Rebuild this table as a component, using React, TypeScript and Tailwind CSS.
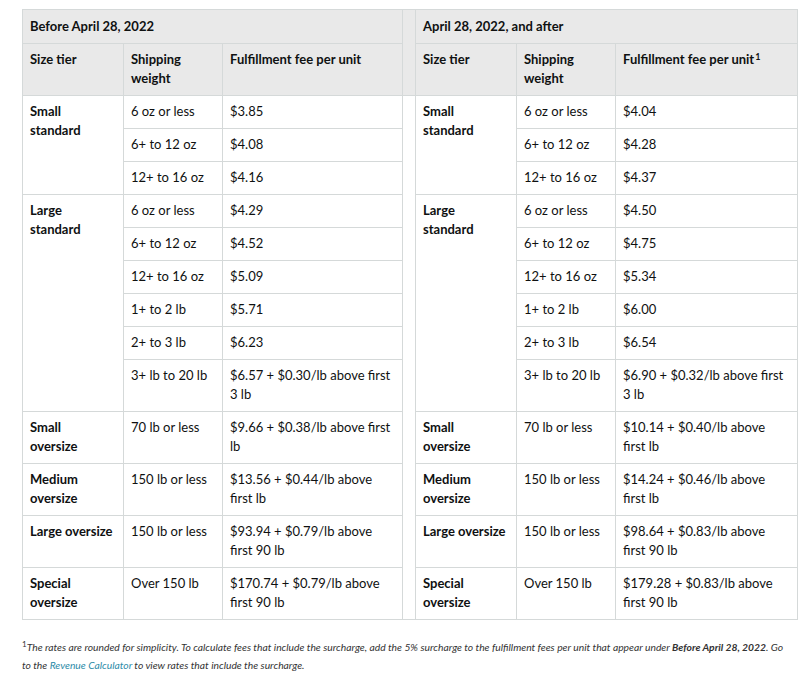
const before = [
  { tier: ["Small", "standard"], rows: [["6 oz or less", "$3.85"], ["6+ to 12 oz", "$4.08"], ["12+ to 16 oz", "$4.16"]] },
  {
    tier: ["Large", "standard"],
    rows: [
      ["6 oz or less", "$4.29"],
      ["6+ to 12 oz", "$4.52"],
      ["12+ to 16 oz", "$5.09"],
      ["1+ to 2 lb", "$5.71"],
      ["2+ to 3 lb", "$6.23"],
      ["3+ lb to 20 lb", "$6.57 + $0.30/lb above first 3 lb"],
    ],
  },
  { tier: ["Small", "oversize"], rows: [["70 lb or less", "$9.66 + $0.38/lb above first lb"]] },
  { tier: ["Medium", "oversize"], rows: [["150 lb or less", "$13.56 + $0.44/lb above first lb"]] },
  { tier: ["Large oversize"], rows: [["150 lb or less", "$93.94 + $0.79/lb above first 90 lb"]] },
  { tier: ["Special", "oversize"], rows: [["Over 150 lb", "$170.74 + $0.79/lb above first 90 lb"]] },
];

const after = [
  ["$4.04", "$4.28", "$4.37"],
  ["$4.50", "$4.75", "$5.34", "$6.00", "$6.54", "$6.90 + $0.32/lb above first 3 lb"],
  ["$10.14 + $0.40/lb above first lb"],
  ["$14.24 + $0.46/lb above first lb"],
  ["$98.64 + $0.83/lb above first 90 lb"],
  ["$179.28 + $0.83/lb above first 90 lb"],
];

const cell = "border border-[#d5d9d9] px-[7px] pt-[6px] pb-[7px] align-top";
const head = "border border-[#d5d9d9] bg-[#e9e9e9] px-[7px] pt-[6px] pb-[7px] align-top text-left font-bold";

// flatten into 13 body rows, tier cell goes on first row of each group
const bodyRows = before.flatMap((group, gi) =>
  group.rows.map((r, ri) => ({
    tier: ri === 0 ? group.tier : null,
    span: group.rows.length,
    weight: r[0],
    feeBefore: r[1],
    feeAfter: after[gi][ri],
  }))
);

const Tier = ({ lines }: { lines: string[] }) => (
  <>
    {lines.map((l, i) => (
      <div key={i} className="whitespace-nowrap">
        {l}
      </div>
    ))}
  </>
);

export default function App() {
  return (
    <div
      className="bg-white min-h-[676px] pt-[9px] pl-[22px] pr-[1px] text-[13px] leading-[19px] text-[#0f1111]"
      style={{ fontFamily: "Lato, 'Liberation Sans', sans-serif" }}
    >
      <table className="border-collapse table-fixed w-[775px]">
        <colgroup>
          <col className="w-[101px]" />
          <col className="w-[99px]" />
          <col className="w-[180px]" />
          <col className="w-[13px]" />
          <col className="w-[101px]" />
          <col className="w-[99px]" />
          <col className="w-[182px]" />
        </colgroup>
        <thead>
          <tr>
            <th colSpan={3} className={`${head} pt-[7px]`}>
              Before April 28, 2022
            </th>
            <th rowSpan={2} className="border border-[#d5d9d9] bg-[#e9e9e9]" />
            <th colSpan={3} className={`${head} pt-[7px]`}>
              April 28, 2022, and after
            </th>
          </tr>
          <tr>
            <th className={head}>Size tier</th>
            <th className={head}>Shipping weight</th>
            <th className={head}>Fulfillment fee per unit</th>
            <th className={head}>Size tier</th>
            <th className={head}>Shipping weight</th>
            <th className={head}>
              Fulfillment fee per unit<sup className="text-[9px] ml-[1px]">1</sup>
            </th>
          </tr>
        </thead>
        <tbody>
          {bodyRows.map((row, i) => (
            <tr key={i}>
              {row.tier && (
                <td rowSpan={row.span} className={`${cell} font-bold`}>
                  <Tier lines={row.tier} />
                </td>
              )}
              <td className={cell}>{row.weight}</td>
              <td className={cell}>{row.feeBefore}</td>
              {i === 0 && <td rowSpan={13} className="border border-[#d5d9d9]" />}
              {row.tier && (
                <td rowSpan={row.span} className={`${cell} font-bold`}>
                  <Tier lines={row.tier} />
                </td>
              )}
              <td className={cell}>{row.weight}</td>
              <td className={cell}>{row.feeAfter}</td>
            </tr>
          ))}
        </tbody>
      </table>

      <p className="mt-[18px] text-[10.3px] leading-[18px] italic text-[#333] whitespace-nowrap">
        <sup className="not-italic text-[8px]">1</sup>
        The rates are rounded for simplicity. To calculate fees that include the surcharge, add the 5% surcharge to
        the fulfillment fees per unit that appear under <b>Before April 28, 2022</b>. Go
        <br />
        to the <span className="text-[#2d8ba8]">Revenue Calculator</span> to view rates that include the surcharge.
      </p>
    </div>
  );
}
